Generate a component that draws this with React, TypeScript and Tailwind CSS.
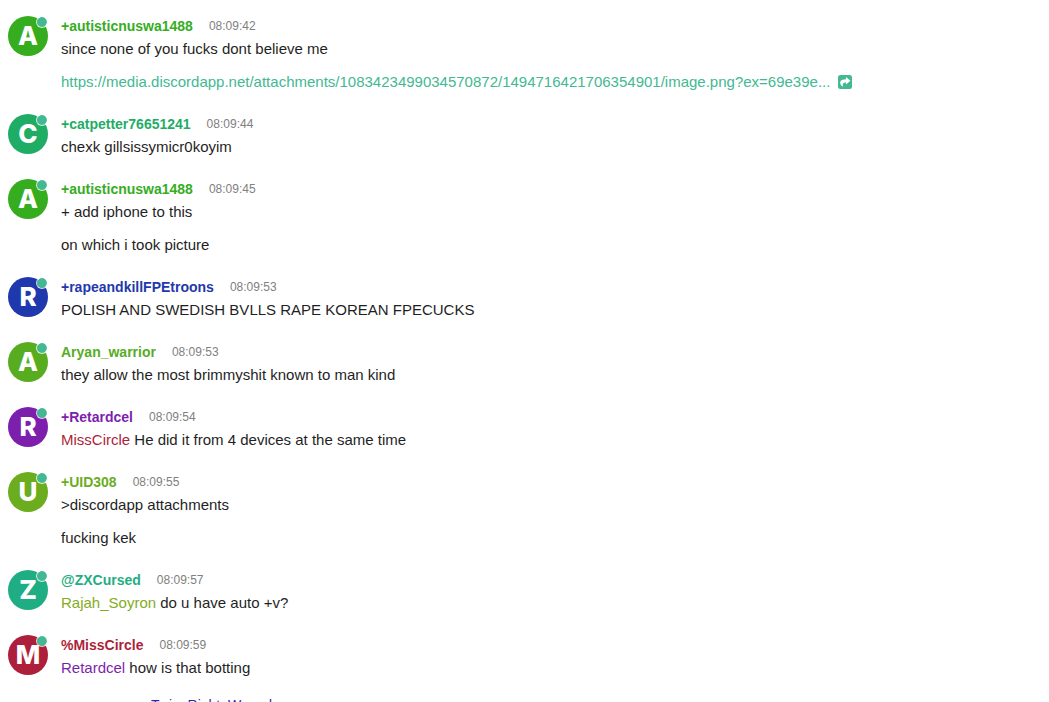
type Part = { text: string; color?: string; href?: string }

type Message = {
  nick: string
  letter: string
  time: string
  color: string
  bg: string
  lines: Part[][]
}

const messages: Message[] = [
  {
    nick: '+autisticnuswa1488',
    letter: 'A',
    time: '08:09:42',
    color: 'text-[#35ad1f]',
    bg: 'bg-[#35ad1f]',
    lines: [
      [{ text: 'since none of you fucks dont believe me' }],
      [
        {
          text: 'https://media.discordapp.net/attachments/1083423499034570872/1494716421706354901/image.png?ex=69e39e...',
          href: '#attachment',
        },
      ],
    ],
  },
  {
    nick: '+catpetter76651241',
    letter: 'C',
    time: '08:09:44',
    color: 'text-[#1fad66]',
    bg: 'bg-[#1fad66]',
    lines: [[{ text: 'chexk gillsissymicr0koyim' }]],
  },
  {
    nick: '+autisticnuswa1488',
    letter: 'A',
    time: '08:09:45',
    color: 'text-[#35ad1f]',
    bg: 'bg-[#35ad1f]',
    lines: [[{ text: '+ add iphone to this' }], [{ text: 'on which i took picture' }]],
  },
  {
    nick: '+rapeandkillFPEtroons',
    letter: 'R',
    time: '08:09:53',
    color: 'text-[#1f38ad]',
    bg: 'bg-[#1f38ad]',
    lines: [[{ text: 'POLISH AND SWEDISH BVLLS RAPE KOREAN FPECUCKS' }]],
  },
  {
    nick: 'Aryan_warrior',
    letter: 'A',
    time: '08:09:53',
    color: 'text-[#57ad1f]',
    bg: 'bg-[#57ad1f]',
    lines: [[{ text: 'they allow the most brimmyshit known to man kind' }]],
  },
  {
    nick: '+Retardcel',
    letter: 'R',
    time: '08:09:54',
    color: 'text-[#7d1fad]',
    bg: 'bg-[#7d1fad]',
    lines: [
      [
        { text: 'MissCircle', color: 'text-[#ad1f3a]' },
        { text: ' He did it from 4 devices at the same time' },
      ],
    ],
  },
  {
    nick: '+UID308',
    letter: 'U',
    time: '08:09:55',
    color: 'text-[#6bad1f]',
    bg: 'bg-[#6bad1f]',
    lines: [[{ text: '>discordapp attachments' }], [{ text: 'fucking kek' }]],
  },
  {
    nick: '@ZXCursed',
    letter: 'Z',
    time: '08:09:57',
    color: 'text-[#1fad83]',
    bg: 'bg-[#1fad83]',
    lines: [
      [
        { text: 'Rajah_Soyron', color: 'text-[#83ad1f]' },
        { text: ' do u have auto +v?' },
      ],
    ],
  },
  {
    nick: '%MissCircle',
    letter: 'M',
    time: '08:09:59',
    color: 'text-[#ad1f3a]',
    bg: 'bg-[#ad1f3a]',
    lines: [
      [
        { text: 'Retardcel', color: 'text-[#7d1fad]' },
        { text: ' how is that botting' },
      ],
    ],
  },
]

function Avatar({ letter, bg }: { letter: string; bg: string }) {
  return (
    <div
      className={`relative flex size-10 shrink-0 items-center justify-center rounded-full font-[Inter,sans-serif] text-[26px] leading-none font-extrabold text-white ${bg}`}
    >
      {letter}
      {/* online status */}
      <span className="absolute top-0 right-0 size-3 rounded-full border border-white/80 bg-[#42b992] bg-clip-padding" />
    </div>
  )
}

function ShareIcon() {
  return (
    <svg viewBox="0 0 14 14" className="size-[14px]" aria-hidden="true">
      <rect width="14" height="14" rx="2.5" fill="currentColor" />
      <path
        d="M8 2 12.4 5.8 8 9.6V7.4C5.2 7.4 4.2 8.6 5 11.8 2.8 10.5 2 9 2.2 7.2 2.5 5 4.8 4.2 8 4.2Z"
        fill="white"
      />
    </svg>
  )
}

function Line({ parts }: { parts: Part[] }) {
  return (
    <p className="text-[15px] leading-[23px]">
      {parts.map((part, i) =>
        part.href ? (
          <a key={i} href={part.href} className="flex items-center gap-2 text-[#42b992]">
            {part.text}
            <ShareIcon />
          </a>
        ) : (
          <span key={i} className={part.color}>
            {part.text}
          </span>
        )
      )}
    </p>
  )
}

function MessageItem({ message }: { message: Message }) {
  return (
    <li className="flex gap-[13px]">
      <Avatar letter={message.letter} bg={message.bg} />
      <div className="min-w-0">
        <div className="flex items-center gap-4">
          <button type="button" className={`text-sm leading-[21px] font-bold ${message.color}`}>
            {message.nick}
          </button>
          <time className="text-xs leading-[21px] text-[#808080]">{message.time}</time>
        </div>
        <div className="flex flex-col gap-[10px]">
          {message.lines.map((parts, i) => (
            <Line key={i} parts={parts} />
          ))}
        </div>
      </div>
    </li>
  )
}

export default function App() {
  return (
    <main className="h-screen overflow-hidden bg-white px-2 pt-4 font-['Liberation_Sans',Arial,sans-serif] text-[#1f1f1f]">
      <ul className="flex flex-col gap-[21px]">
        {messages.map((message, i) => (
          <MessageItem key={i} message={message} />
        ))}
      </ul>
      <p className="mt-4 pl-[143px] text-sm text-[#381fad]">Twin_Right_Wound</p>
    </main>
  )
}
